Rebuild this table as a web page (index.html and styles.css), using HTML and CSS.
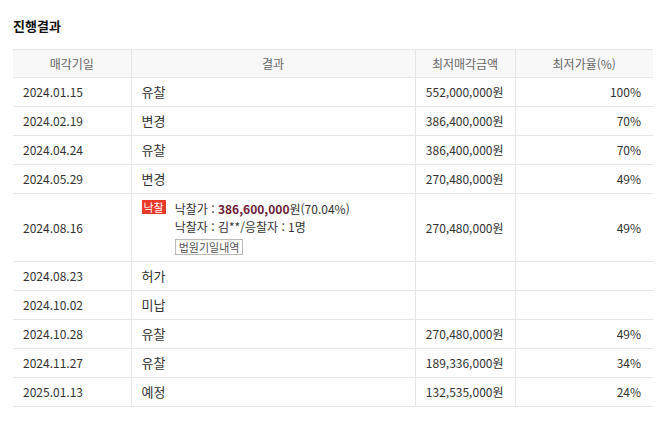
FILE: index.html
```html
<!DOCTYPE html>
<html lang="ko">
<head>
<meta charset="utf-8">
<title>진행결과</title>
<link rel="stylesheet" href="styles.css">
</head>
<body>
<div class="wrap">
  <h3 class="title">진행결과</h3>
  <table class="result">
    <colgroup>
      <col class="c1"><col class="c2"><col class="c3"><col class="c4">
    </colgroup>
    <thead>
      <tr><th>매각기일</th><th>결과</th><th>최저매각금액</th><th>최저가율(%)</th></tr>
    </thead>
    <tbody>
      <tr><td>2024.01.15</td><td class="res">유찰</td><td class="num">552,000,000원</td><td class="num">100%</td></tr>
      <tr><td>2024.02.19</td><td class="res">변경</td><td class="num">386,400,000원</td><td class="num">70%</td></tr>
      <tr><td>2024.04.24</td><td class="res">유찰</td><td class="num">386,400,000원</td><td class="num">70%</td></tr>
      <tr><td>2024.05.29</td><td class="res">변경</td><td class="num">270,480,000원</td><td class="num">49%</td></tr>
      <tr class="big">
        <td>2024.08.16</td>
        <td class="res">
          <div class="sold">
            <span class="badge">낙찰</span>
            <div class="info">
              <div class="line">낙찰가 : <b class="price">386,600,000</b>원(70.04%)</div>
              <div class="line">낙찰자 : 김**/응찰자 : 1명</div>
              <button class="btn" type="button">법원기일내역</button>
            </div>
          </div>
        </td>
        <td class="num">270,480,000원</td><td class="num">49%</td>
      </tr>
      <tr><td>2024.08.23</td><td class="res">허가</td><td class="num"></td><td class="num"></td></tr>
      <tr><td>2024.10.02</td><td class="res">미납</td><td class="num"></td><td class="num"></td></tr>
      <tr><td>2024.10.28</td><td class="res">유찰</td><td class="num">270,480,000원</td><td class="num">49%</td></tr>
      <tr><td>2024.11.27</td><td class="res">유찰</td><td class="num">189,336,000원</td><td class="num">34%</td></tr>
      <tr><td>2025.01.13</td><td class="res">예정</td><td class="num">132,535,000원</td><td class="num">24%</td></tr>
    </tbody>
  </table>
</div>
</body>
</html>
```

FILE: styles.css
```css
html, body {
  margin: 0;
  padding: 0;
  background: #fff;
}
body {
  font-family: "Noto Sans CJK KR", "Noto Sans", sans-serif;
  color: #333;
  font-size: 12px;
}
.wrap {
  padding: 16px 18px 0 13px;
}
.title {
  margin: 0 0 14px 0;
  font-size: 13px;
  font-weight: bold;
  color: #111;
  line-height: 19px;
}
.result {
  width: 640px;
  border-collapse: collapse;
  table-layout: fixed;
}
.c1 { width: 118px; }
.c2 { width: 284px; }
.c3 { width: 100px; }
.c4 { width: 138px; }
.result th {
  background: #f8f8f8;
  color: #666;
  font-weight: normal;
  height: 27px;
  padding: 0;
  border-top: 1px solid #e6e6e6;
  border-bottom: 1px solid #e6e6e6;
  border-left: 1px solid #e6e6e6;
  font-size: 12px;
  line-height: 16px;
}
.result th:first-child { border-left: none; }
.result td {
  height: 28px;
  padding: 0 10px;
  border-bottom: 1px solid #e6e6e6;
  border-left: 1px solid #e6e6e6;
  line-height: 16px;
  color: #333;
}
.result td:first-child { border-left: none; }
.result td.num {
  text-align: right;
  padding-right: 11px;
}
.result td:last-child { padding-right: 12px; }
.result td.res { padding-left: 10px; font-size: 13px; }
.big td { height: 67px; }
.big td.res { vertical-align: middle; }
.sold {
  display: flex;
  align-items: flex-start;
  gap: 9px;
}
.badge {
  background: #e8392b;
  color: #fff;
  font-size: 11px;
  line-height: 14px;
  padding: 0 2px;
  margin-top: 0;
}
.info {
  display: flex;
  flex-direction: column;
}
.line {
  line-height: 18px;
  font-size: 12px;
}
.price {
  color: #6d1b36;
  font-weight: bold;
}
.btn {
  align-self: flex-start;
  margin-top: 3px;
  background: #fff;
  border: 1px solid #bbb;
  color: #555;
  font-family: inherit;
  font-size: 11px;
  line-height: 14px;
  padding: 0 3px;
  border-radius: 0;
}
```
